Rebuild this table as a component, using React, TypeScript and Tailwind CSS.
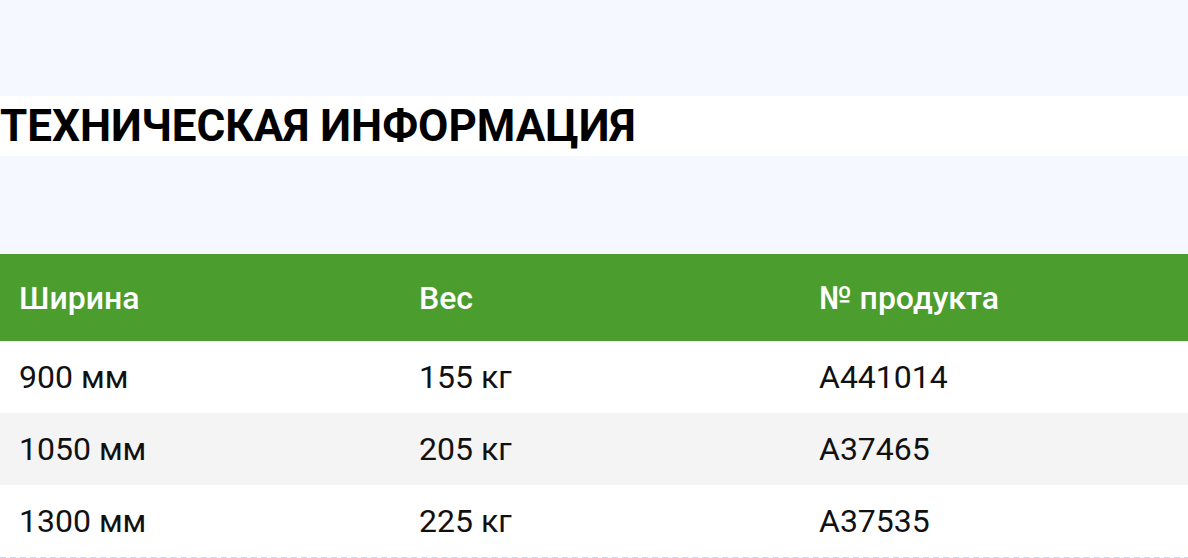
const rows = [
  { width: '900 мм', weight: '155 кг', code: 'A441014' },
  { width: '1050 мм', weight: '205 кг', code: 'A37465' },
  { width: '1300 мм', weight: '225 кг', code: 'A37535' },
];

export default function App() {
  return (
    <div className="min-h-[558px] w-[1188px] overflow-hidden bg-[#f5f8fe] pt-[96px] font-['Roboto',sans-serif]">
      <h2 className="flex h-[60px] items-center whitespace-nowrap bg-white text-[44px] font-bold leading-none text-black">
        ТЕХНИЧЕСКАЯ ИНФОРМАЦИЯ
      </h2>
      <div className="h-[98px]" />
      <div className="w-[1200px] border-b-2 border-dashed border-[#c9d7f7] bg-white">
        <div className="grid h-[87px] grid-cols-[400px_400px_400px] items-center bg-[#4b9e2d] text-[32px] font-medium text-white">
          <div className="pl-[19px]">Ширина</div>
          <div className="pl-[19px]">Вес</div>
          <div className="pl-[19px]">№ продукта</div>
        </div>
        {rows.map((r, i) => (
          <div
            key={r.code}
            className={`grid h-[72px] grid-cols-[400px_400px_400px] items-center text-[32px] text-[#111] ${i % 2 === 1 ? 'bg-[#f4f4f4]' : 'bg-white'}`}
          >
            <div className="pl-[19px]">{r.width}</div>
            <div className="pl-[19px]">{r.weight}</div>
            <div className="pl-[19px]">{r.code}</div>
          </div>
        ))}
      </div>
    </div>
  );
}
